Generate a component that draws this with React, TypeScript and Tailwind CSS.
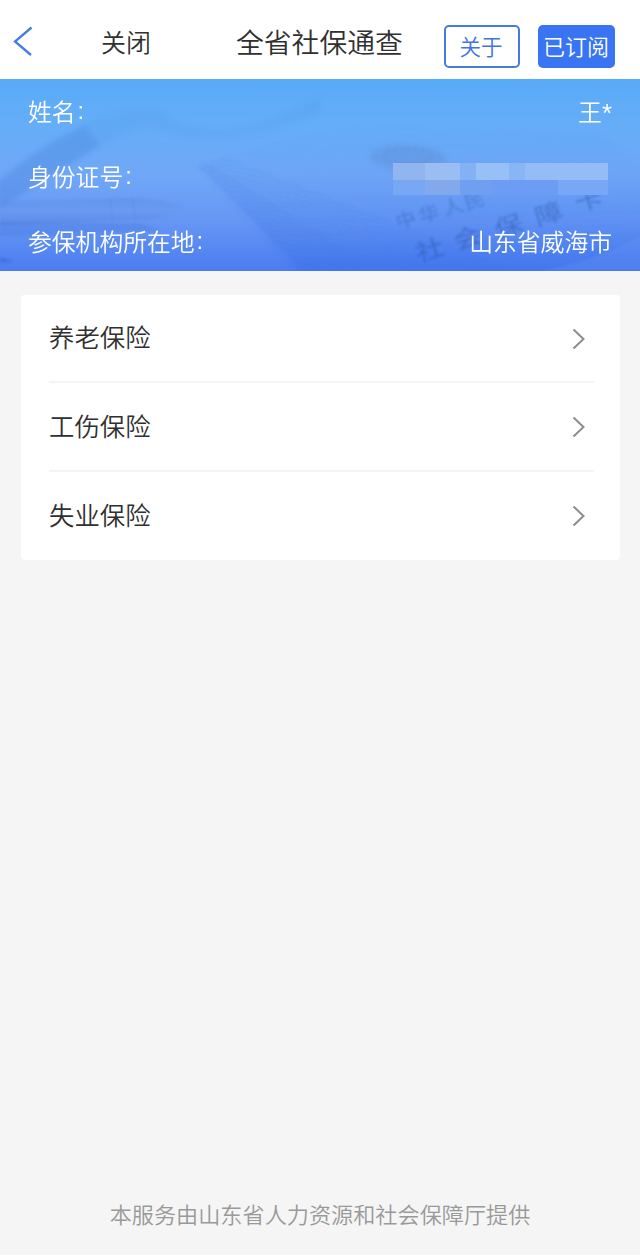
import React from 'react';

const insurances: string[] = ['养老保险', '工伤保险', '失业保险'];

function ChevronRight() {
  return (
    <svg width="14" height="22" viewBox="0 0 14 22" fill="none" className="mr-2 mt-px">
      <path d="M1.5 1.5 L11.5 11 L1.5 20.5" stroke="#8c8c8c" strokeWidth="2" />
    </svg>
  );
}

function BannerArt() {
  return (
    <svg className="absolute inset-0" width="640" height="192" viewBox="0 0 640 192">
      <defs>
        <linearGradient id="sky" x1="0" y1="0" x2="0" y2="1">
          <stop offset="0" stopColor="#58abf7" />
          <stop offset="0.25" stopColor="#66adf8" />
          <stop offset="0.5" stopColor="#70a7f7" />
          <stop offset="0.75" stopColor="#6596f4" />
          <stop offset="1" stopColor="#4a7cf0" />
        </linearGradient>
        <linearGradient id="card" x1="0" y1="0" x2="0.1" y2="1">
          <stop offset="0" stopColor="#4a86e8" stopOpacity="0" />
          <stop offset="0.5" stopColor="#3f7aec" stopOpacity="0.08" />
          <stop offset="1" stopColor="#2f68e6" stopOpacity="0.28" />
        </linearGradient>
        <linearGradient id="barrel" x1="0" y1="0" x2="0" y2="1">
          <stop offset="0" stopColor="#4678ce" stopOpacity="0.2" />
          <stop offset="0.45" stopColor="#6e9ae6" stopOpacity="0.2" />
          <stop offset="1" stopColor="#4470cf" stopOpacity="0.38" />
        </linearGradient>
        <pattern id="ripples" width="9" height="5" patternUnits="userSpaceOnUse" patternTransform="rotate(12)">
          <path d="M0 1 Q4 4 9 1" fill="none" stroke="#3367d6" strokeWidth="1" opacity="0.24" />
        </pattern>
        <linearGradient id="fade" x1="0" y1="0" x2="1" y2="0">
          <stop offset="0" stopColor="#fff" stopOpacity="0.6" />
          <stop offset="0.35" stopColor="#fff" stopOpacity="0.8" />
          <stop offset="1" stopColor="#fff" stopOpacity="0" />
        </linearGradient>
        <mask id="edge">
          <rect x="190" y="70" width="330" height="122" fill="url(#fade)" />
        </mask>
        <filter id="soft" x="-20%" y="-20%" width="140%" height="140%">
          <feGaussianBlur stdDeviation="2.5" />
        </filter>
        <filter id="fine">
          <feGaussianBlur stdDeviation="0.8" />
        </filter>
      </defs>
      <rect width="640" height="192" fill="url(#sky)" />
      <g filter="url(#soft)">
        <path d="M-4 104 Q38 68 85 46 L100 66 Q75 84 50 96 L0 130 Z" fill="#4b83da" opacity="0.36" />
        <path d="M85 46 Q118 28 158 32 Q220 74 320 18 L320 34 Q220 76 150 48 Q125 52 100 66 Z" fill="#4f96e5" opacity="0.2" />
        <path d="M198 87 L360 45 L600 56 L660 95 L660 200 L306 200 Z" fill="url(#card)" />
      </g>
      <g filter="url(#fine)">
        <path d="M0 123 L128 119 Q162 119 184 128 Q162 142 132 141 L0 146 Z" fill="url(#barrel)" />
        <path d="M110 119 L112 142 M132 119 L136 142" stroke="#4a77ca" strokeWidth="1" opacity="0.25" />
        <path d="M0 143 L138 144 L160 151 L0 157 Z" fill="#3f71d6" opacity="0.24" />
        <path d="M198 87 L212 86 L380 192 L306 192 Z" fill="#3b70df" opacity="0.08" />
        <path d="M198 87 L225 78 L520 192 L306 192 Z" fill="url(#ripples)" mask="url(#edge)" />
        <path d="M0 178 L14 182 L0 184 Z" fill="#315dbd" opacity="0.4" />
        <path d="M540 192 Q605 180 650 150 L650 192 Z" fill="#6f99f7" opacity="0.25" />
      </g>
      <g filter="url(#soft)">
        <ellipse cx="408" cy="79" rx="38" ry="13" fill="#5b83cc" opacity="0.3" transform="rotate(3 408 79)" />
      </g>
      <ellipse cx="408" cy="77" rx="24" ry="7" fill="none" stroke="#5f80c4" strokeWidth="3" strokeDasharray="4 3" opacity="0.2" filter="url(#fine)" />
      <g fill="#254e9f" className="font-['Noto_Sans_CJK_SC',sans-serif]" filter="url(#fine)" textAnchor="middle" fontWeight="400">
        <g opacity="0.32" fontSize="20">
          <text transform="matrix(.95 -.28 .3 .85 408 147)">中</text>
          <text transform="matrix(.95 -.28 .3 .85 431 141)">华</text>
          <text transform="matrix(.95 -.28 .3 .85 455 134)">人</text>
          <text transform="matrix(.95 -.28 .3 .85 476 128)">民</text>
        </g>
        <g opacity="0.42" fontSize="27">
          <text transform="matrix(.98 -.32 .25 .82 432 179)">社</text>
          <text transform="matrix(.98 -.32 .25 .82 470 167)">会</text>
          <text transform="matrix(.98 -.32 .25 .82 511 155)">保</text>
          <text transform="matrix(.98 -.32 .25 .82 551 143)">障</text>
          <text transform="matrix(.98 -.32 .25 .82 591 129)">卡</text>
        </g>
      </g>
    </svg>
  );
}

function RedactedNumber() {
  return (
    <div className="mr-1 mt-[7px] flex h-8 w-[215px] flex-col">
      <div className="flex h-[17px]">
        <div className="w-8 bg-[#91b6ef]" />
        <div className="w-[35px] bg-[#9abef2]" />
        <div className="w-4 bg-[#84b1f4]" />
        <div className="w-[33px] bg-[#97c1f6]" />
        <div className="w-4 bg-[#88b5f4]" />
        <div className="flex-1 bg-[#93bdf4]" />
      </div>
      <div className="flex h-[15px] bg-[#6c9cf4]">
        <div className="w-8 bg-[#78a7f3]" />
        <div className="w-[35px] bg-[#83a9ec]" />
        <div className="w-8 bg-[#709ff2]" />
        <div className="ml-auto w-[50px] bg-[#78a8f5]" />
      </div>
    </div>
  );
}

function Label({ children }: { children: string }) {
  return (
    <span className="flex">
      {children}
      <span className="ml-0.5 font-['Liberation_Sans',sans-serif]">:</span>
    </span>
  );
}

export default function App() {
  return (
    <div className="flex h-[1256px] w-[640px] flex-col overflow-hidden border-b border-white bg-[#f5f5f5] font-['Noto_Sans_CJK_SC',sans-serif] font-[350] text-[#303030]">
      <header className="flex h-[79px] shrink-0 items-start bg-white">
        <svg width="22" height="32" viewBox="0 0 22 32" fill="none" className="ml-3 mt-[26px]">
          <path d="M19.5 1.5 L3 15.5 L19 29" stroke="#477be5" strokeWidth="2.3" />
        </svg>
        <button className="ml-[66px] mt-[21px] w-[52px] whitespace-nowrap text-[25px] leading-10">关闭</button>
        <h1 className="ml-[84px] mt-[21px] w-[168px] whitespace-nowrap text-[27.8px] font-[350] leading-10">全省社保通查</h1>
        <button className="ml-[40px] mt-[25px] h-[43px] w-[76px] rounded-[5px] border-2 border-[#477be0] pb-0.5 pr-0.5 text-[21.6px] leading-[36px] text-[#3d74e2]">关于</button>
        <button className="ml-[18px] mt-[25px] h-[43px] w-[77px] whitespace-nowrap rounded-[5px] bg-[#3974f3] pb-[3px] pr-px text-[22px] leading-[40px] text-white">已订阅</button>
      </header>

      <section className="relative h-[192px] shrink-0 overflow-hidden">
        <BannerArt />
        <div className="relative -mt-px flex flex-col pl-7 pr-7 text-[23.8px] leading-9 text-white">
          <div className="flex h-[65px] items-center justify-between">
            <Label>姓名</Label>
            <span className="flex h-9">王<span className="font-['Liberation_Sans',sans-serif] text-[26px] leading-[41px]">*</span></span>
          </div>
          <div className="flex h-[65px] items-center justify-between">
            <Label>身份证号</Label>
            <RedactedNumber />
          </div>
          <div className="flex h-[65px] items-center justify-between">
            <Label>参保机构所在地</Label>
            <span>山东省威海市</span>
          </div>
        </div>
      </section>

      <main className="ml-[21px] mr-5 mt-6 h-[265px] shrink-0 rounded-sm bg-white pl-7 pr-[26px]">
        {insurances.map((name, index) => (
          <div
            key={name}
            className={`flex items-center justify-between text-[25.4px] ${
              index < 2 ? 'border-b-2 border-[#f4f4f4]' : 'pb-0.5'
            } ${index === 0 ? 'h-[88px]' : 'h-[89px]'}`}
          >
            <span className="-mt-[3px]">{name}</span>
            <ChevronRight />
          </div>
        ))}
      </main>

      <footer className="mb-[22px] mt-auto whitespace-nowrap text-center text-[22.15px] leading-10 text-[#999999]">
        本服务由山东省人力资源和社会保障厅提供
      </footer>
    </div>
  );
}
